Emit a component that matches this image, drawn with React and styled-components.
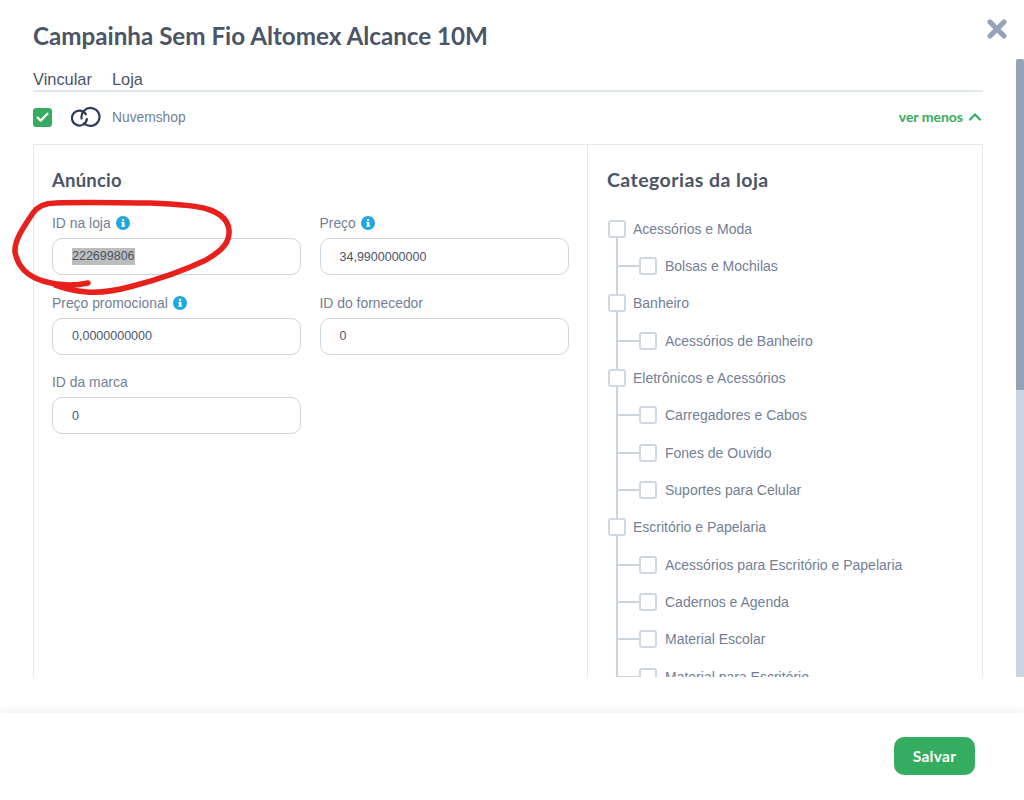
import React from 'react';
import styled, { createGlobalStyle } from 'styled-components';
import { X, ChevronUp, Check } from 'lucide-react';

const GlobalStyle = createGlobalStyle`
  html, body {
    margin: 0;
    padding: 0;
    background: #fff;
    overflow: hidden;
    font-family: "Liberation Sans", Arial, sans-serif;
  }
  * { box-sizing: border-box; }
`;

const Page = styled.div`
  position: relative;
  width: 1024px;
  height: 800px;
  display: flex;
  flex-direction: column;
  overflow: hidden;
  background: #fff;
`;

const Scroller = styled.div`
  height: 677px;
  overflow: hidden;
  display: flex;
`;

const Content = styled.main`
  flex: 1;
  padding: 19px 33px 0 33px;
`;

const Title = styled.h1`
  margin: 0;
  height: 34px;
  line-height: 34px;
  font-family: Lato, sans-serif;
  font-size: 24.2px;
  font-weight: 700;
  color: #4a5568;
`;

const Tabs = styled.div`
  display: flex;
  gap: 20px;
  margin-top: 16px;
  height: 23px;
  border-bottom: 2px solid #e2e8f0;
`;

const Tab = styled.span`
  font-size: 16.4px;
  line-height: 21px;
  color: #4a5568;
`;

const StoreRow = styled.div`
  display: flex;
  align-items: center;
  height: 52px;
  padding-bottom: 2px;
`;

const GreenBox = styled.span`
  width: 19px;
  height: 19px;
  border-radius: 3px;
  background: #34ad60;
  color: #fff;
  display: flex;
  align-items: center;
  justify-content: center;
`;

const LogoSlot = styled.span`
  display: flex;
  margin-left: 19px;
  width: 41px;
`;

const StoreName = styled.span`
  font-size: 13.8px;
  color: #718096;
`;

const MoreLink = styled.a`
  margin-left: auto;
  margin-right: -2px;
  padding-bottom: 1px;
  display: flex;
  align-items: center;
  gap: 2px;
  font-family: Lato, sans-serif;
  font-size: 14px;
  font-weight: 700;
  color: #34ad60;
`;

const Panel = styled.div`
  display: grid;
  grid-template-columns: 554px 1fr;
  border: 1px solid #e2e8f0;
  height: 600px;
`;

const LeftColumn = styled.section`
  padding: 23px 18px 0 18px;
  border-right: 1px solid #e2e8f0;
`;

const RightColumn = styled.section`
  padding: 23px 19px 0 19px;
`;

const SectionTitle = styled.h2`
  margin: 0;
  height: 24px;
  line-height: 24px;
  font-family: Lato, sans-serif;
  font-weight: 700;
  color: #4a5568;
  font-size: ${p => p.$size}px;
  letter-spacing: ${p => p.$spacing}px;
`;

const FieldGrid = styled.div`
  display: grid;
  grid-template-columns: 249px 249px;
  column-gap: 18.5px;
  row-gap: 17.5px;
  margin-top: 21px;
`;

const Field = styled.div`
  display: flex;
  flex-direction: column;
`;

const Label = styled.label`
  display: flex;
  align-items: center;
  gap: 5px;
  height: 20px;
  margin-bottom: 5px;
  font-size: 13.9px;
  color: #718096;
`;

const InputBox = styled.div`
  height: 37px;
  border: 1px solid #cbd5e0;
  border-radius: 10px;
  padding-left: 19px;
  display: flex;
  align-items: center;
  font-size: 12.5px;
  color: #4a5568;
`;

const Selected = styled.span`
  background: #bdbdbd;
  line-height: 17px;
`;

const Tree = styled.div`
  position: relative;
  margin-top: 18px;

  &::before {
    content: "";
    position: absolute;
    left: 9px;
    top: 18px;
    bottom: 0;
    width: 2px;
    background: #cbd5e0;
  }
`;

const TreeRow = styled.div`
  position: relative;
  display: flex;
  align-items: center;
  gap: ${p => (p.$child ? 8 : 7)}px;
  height: 37.35px;
  padding-left: ${p => (p.$child ? 32 : 1)}px;
  font-size: 14px;
  color: #718096;

  ${p => p.$child && `
    &::before {
      content: "";
      position: absolute;
      left: 10px;
      top: 50%;
      width: 22px;
      height: 2px;
      margin-top: -1px;
      background: #cbd5e0;
    }
  `}
`;

const Box = styled.span`
  position: relative;
  width: 18px;
  height: 18px;
  flex: none;
  background: #fff;
  border: 2px solid #cfd8e3;
  border-radius: 3px;
`;

const ScrollTrack = styled.div`
  width: 8px;
  margin-top: 59px;
  background: #cbd5e0;
`;

const ScrollThumb = styled.div`
  height: 331px;
  background: #94a3b8;
  border-radius: 3px 3px 0 0;
`;

const Footer = styled.footer`
  margin-top: 36px;
  flex: 1;
  display: flex;
  justify-content: flex-end;
  align-items: flex-start;
  padding: 24px 49px 0 0;
  background: #fff;
  box-shadow: 0 -3px 8px rgba(74, 85, 104, 0.08);
`;

const SaveButton = styled.button`
  width: 81px;
  height: 38px;
  border: 0;
  border-radius: 10px;
  background: #34ad60;
  color: #fff;
  font-family: Lato, sans-serif;
  font-size: 15.5px;
  font-weight: 700;
  letter-spacing: 0.3px;
`;

const CloseButton = styled.span`
  position: absolute;
  left: 983px;
  top: 15px;
  color: #94a3b8;
  display: flex;
`;

const Scribble = styled.svg`
  position: absolute;
  left: 0;
  top: 0;
  pointer-events: none;
`;

const InfoIcon = () => (
  <svg width="14" height="14" viewBox="0 0 14 14">
    <circle cx="7" cy="7" r="7" fill="#1ea7e4" />
    <rect x="6" y="6" width="2.4" height="4.6" fill="#fff" />
    <rect x="5.2" y="6" width="2" height="1.1" fill="#fff" />
    <rect x="5.2" y="9.6" width="4" height="1.1" fill="#fff" />
    <circle cx="7.1" cy="4" r="1.2" fill="#fff" />
  </svg>
);

const CloudLogo = () => (
  <svg width="30" height="22" viewBox="0 0 30 22" fill="none" stroke="#2d3a5e" strokeWidth="2.2" strokeLinecap="round">
    <path d="M14.9 8.2A7.5 7.5 0 1 0 15.9 13" />
    <path d="M10.6 12.5A9 9 0 1 1 13 17.2" />
  </svg>
);

const fields = [
  { label: 'ID na loja', value: '222699806', info: true, selected: true },
  { label: 'Preço', value: '34,9900000000', info: true },
  { label: 'Preço promocional', value: '0,0000000000', info: true },
  { label: 'ID do fornecedor', value: '0' },
  { label: 'ID da marca', value: '0' },
];

const categories = [
  { name: 'Acessórios e Moda' },
  { name: 'Bolsas e Mochilas', child: true },
  { name: 'Banheiro' },
  { name: 'Acessórios de Banheiro', child: true },
  { name: 'Eletrônicos e Acessórios' },
  { name: 'Carregadores e Cabos', child: true },
  { name: 'Fones de Ouvido', child: true },
  { name: 'Suportes para Celular', child: true },
  { name: 'Escritório e Papelaria' },
  { name: 'Acessórios para Escritório e Papelaria', child: true },
  { name: 'Cadernos e Agenda', child: true },
  { name: 'Material Escolar', child: true },
  { name: 'Material para Escritório', child: true },
];

export default function App() {
  return (
    <Page>
      <GlobalStyle />
      <Scroller>
        <Content>
          <Title>Campainha Sem Fio Altomex Alcance 10M</Title>
          <Tabs>
            <Tab>Vincular</Tab>
            <Tab>Loja</Tab>
          </Tabs>
          <StoreRow>
            <GreenBox><Check size={15} strokeWidth={3.5} /></GreenBox>
            <LogoSlot><CloudLogo /></LogoSlot>
            <StoreName>Nuvemshop</StoreName>
            <MoreLink>ver menos <ChevronUp size={20} strokeWidth={2.6} /></MoreLink>
          </StoreRow>
          <Panel>
            <LeftColumn>
              <SectionTitle $size={18.5} $spacing={0.2}>Anúncio</SectionTitle>
              <FieldGrid>
                {fields.map(f => (
                  <Field key={f.label}>
                    <Label>{f.label}{f.info && <InfoIcon />}</Label>
                    <InputBox>{f.selected ? <Selected>{f.value}</Selected> : f.value}</InputBox>
                  </Field>
                ))}
              </FieldGrid>
            </LeftColumn>
            <RightColumn>
              <SectionTitle $size={19.5} $spacing={0.45}>Categorias da loja</SectionTitle>
              <Tree>
                {categories.map(c => (
                  <TreeRow key={c.name} $child={c.child}>
                    <Box />
                    {c.name}
                  </TreeRow>
                ))}
              </Tree>
            </RightColumn>
          </Panel>
        </Content>
        <ScrollTrack><ScrollThumb /></ScrollTrack>
      </Scroller>
      <Footer>
        <SaveButton>Salvar</SaveButton>
      </Footer>
      <CloseButton><X size={28} strokeWidth={4.5} /></CloseButton>
      <Scribble width="1024" height="800" fill="none">
        <path
          d="M88 283 C74 286 60 286 43 281 C30 277 18 269 15 252 C14 240 25 225 33 213 C38 206 45 203 55 203 C90 202 120 203 150 203 C175 204 195 205 207 209 C220 213 228 220 229 230 C230 242 223 250 206 260 C185 270 160 279 133 286 C115 291 100 293 87 292 C75 291 65 289 55 285"
          stroke="#e8201c"
          strokeWidth="5.5"
          strokeLinecap="round"
        />
      </Scribble>
    </Page>
  );
}
